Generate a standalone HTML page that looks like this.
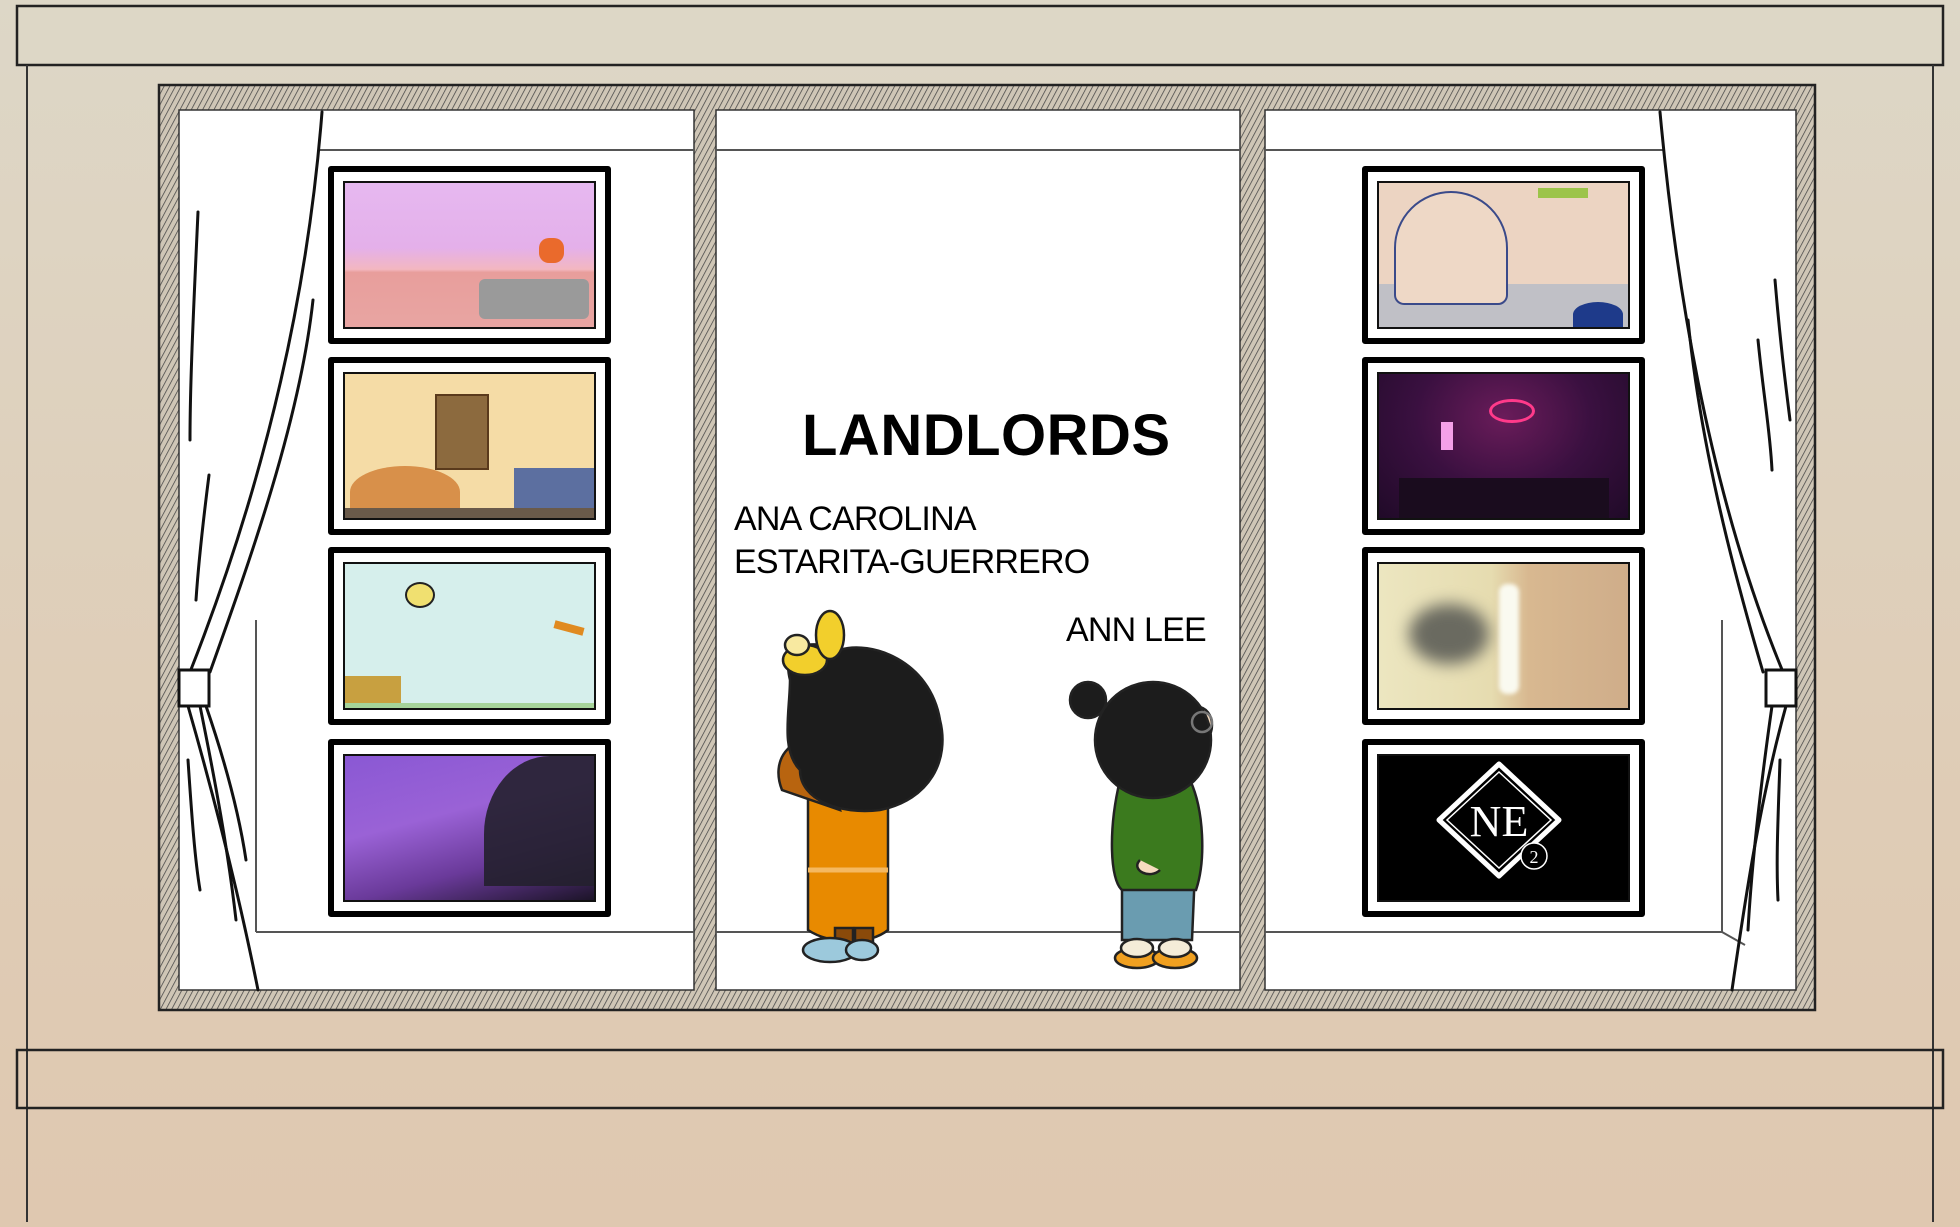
<!DOCTYPE html>
<html><head><meta charset="utf-8">
<style>
html,body{margin:0;padding:0;}
body{width:1960px;height:1227px;overflow:hidden;position:relative;background:linear-gradient(#ddd7c7,#dfcdb7 60%,#dfc8b0);font-family:"Liberation Sans",sans-serif;}
svg{position:absolute;left:0;top:0;}
.t{position:absolute;color:#000;white-space:nowrap;}
.thumb{position:absolute;width:271px;height:166px;border:6px solid #000;border-radius:3px;background:#fff;}
.thumb .img{position:absolute;left:9px;top:9px;right:9px;bottom:9px;border:2px solid #111;overflow:hidden;}
</style></head><body>
<svg width="1960" height="1227" viewBox="0 0 1960 1227">
<defs>
<pattern id="h" width="5" height="5" patternUnits="userSpaceOnUse" patternTransform="rotate(28)">
<rect width="5" height="5" fill="#cfc6b6"/><line x1="0" y1="0" x2="0" y2="5" stroke="#444" stroke-width="1.5"/>
</pattern>
</defs>
<!-- top rail -->
<rect x="17" y="6" width="1926" height="59" fill="#ddd7c6" stroke="#222" stroke-width="2.5"/>
<line x1="27" y1="65" x2="27" y2="1222" stroke="#333" stroke-width="2"/>
<line x1="1933" y1="65" x2="1933" y2="1222" stroke="#333" stroke-width="2"/>
<!-- bottom rail -->
<rect x="17" y="1050" width="1926" height="58" fill="none" stroke="#222" stroke-width="2.5"/>
<!-- frame -->
<rect x="159" y="85" width="1656" height="925" fill="url(#h)" stroke="#222" stroke-width="2.5"/>
<rect x="179" y="110" width="515" height="880" fill="#fff" stroke="#333" stroke-width="1.5"/>
<rect x="716" y="110" width="524" height="880" fill="#fff" stroke="#333" stroke-width="1.5"/>
<rect x="1265" y="110" width="531" height="880" fill="#fff" stroke="#333" stroke-width="1.5"/>
<!-- inner lines -->
<g stroke="#555" stroke-width="2" fill="none">
<line x1="318" y1="150" x2="694" y2="150"/>
<line x1="716" y1="150" x2="1240" y2="150"/>
<line x1="1265" y1="150" x2="1664" y2="150"/>
<line x1="256" y1="932" x2="694" y2="932"/>
<line x1="716" y1="932" x2="1240" y2="932"/>
<line x1="1265" y1="932" x2="1722" y2="932"/>
<line x1="256" y1="620" x2="256" y2="932"/>
<line x1="1722" y1="620" x2="1722" y2="932"/>
<line x1="1722" y1="932" x2="1745" y2="945"/>
</g>
<!-- left curtain -->
<g stroke="#111" stroke-width="3" fill="none" stroke-linecap="round">
<path d="M322 112 C305 330 250 520 190 672"/>
<path d="M210 672 C250 560 300 420 313 300"/>
<path d="M188 706 C215 800 240 900 258 990"/>
<path d="M200 706 C215 780 228 850 236 920"/>
<path d="M198 212 C194 300 190 380 190 440"/>
<path d="M209 475 C202 530 198 570 196 600"/>
<path d="M188 760 C192 820 195 860 200 890"/>
<path d="M206 706 C228 770 240 820 246 860"/>
</g>
<rect x="179" y="670" width="30" height="36" fill="#fff" stroke="#111" stroke-width="3"/>
<!-- right curtain -->
<g stroke="#111" stroke-width="3" fill="none" stroke-linecap="round">
<path d="M1660 112 C1680 330 1720 520 1783 672"/>
<path d="M1763 672 C1730 560 1700 440 1688 320"/>
<path d="M1786 706 C1760 800 1745 900 1732 990"/>
<path d="M1772 706 C1760 790 1752 860 1748 930"/>
<path d="M1775 280 C1780 340 1785 380 1790 420"/>
<path d="M1758 340 C1764 400 1770 430 1772 470"/>
<path d="M1780 760 C1778 820 1776 860 1778 900"/>
</g>
<rect x="1766" y="670" width="30" height="36" fill="#fff" stroke="#111" stroke-width="3"/>
<!-- girl -->
<g stroke="#222" stroke-width="2.5">
<path d="M808 785 L808 930 C830 945 870 945 888 930 L888 790 Z" fill="#e88a00"/>
<line x1="808" y1="870" x2="888" y2="870" stroke="#f5b860" stroke-width="5"/>
<path d="M782 790 C770 760 790 735 820 740 L840 810 Z" fill="#b8640f"/>
<rect x="835" y="928" width="18" height="26" fill="#8a4a0a"/>
<rect x="855" y="928" width="18" height="26" fill="#8a4a0a"/>
<ellipse cx="830" cy="950" rx="27" ry="12" fill="#9cc9dc"/>
<ellipse cx="862" cy="950" rx="16" ry="10" fill="#9cc9dc"/>
<path d="M790 680 C780 640 815 640 840 650 C870 640 930 660 940 720 C950 760 930 800 880 810 C840 815 800 800 800 770 C780 750 790 710 790 680Z" fill="#1c1c1c"/>
<ellipse cx="805" cy="660" rx="22" ry="15" fill="#f2cf2c"/>
<ellipse cx="830" cy="635" rx="14" ry="24" fill="#f2cf2c"/>
<ellipse cx="797" cy="645" rx="12" ry="10" fill="#f8e9a0"/>
</g>
<!-- boy -->
<g stroke="#222" stroke-width="2.5">
<path d="M1122 870 L1122 940 L1192 940 L1195 870 Z" fill="#6a9cb0"/>
<path d="M1120 780 C1108 830 1110 880 1122 890 L1196 890 C1206 860 1204 810 1190 780 Z" fill="#3b7a1e"/>
<ellipse cx="1137" cy="958" rx="22" ry="10" fill="#f0a020"/>
<ellipse cx="1175" cy="958" rx="22" ry="10" fill="#f0a020"/>
<ellipse cx="1137" cy="948" rx="16" ry="9" fill="#f4ecd8"/>
<ellipse cx="1175" cy="948" rx="16" ry="9" fill="#f4ecd8"/>
<ellipse cx="1198" cy="725" rx="14" ry="18" fill="#f6dcc0"/>
<circle cx="1153" cy="740" r="58" fill="#1c1c1c"/>
<circle cx="1088" cy="700" r="18" fill="#1c1c1c"/>
<circle cx="1202" cy="722" r="10" fill="none" stroke="#777"/>
<path d="M1140 860 C1130 870 1150 880 1160 870" fill="#f6dcc0"/>
</g>
</svg>

<div class="t" style="left:802px;top:402px;font-size:58px;font-weight:bold;letter-spacing:0.5px;">LANDLORDS</div>
<div class="t" style="left:734px;top:498px;font-size:34px;line-height:43px;letter-spacing:-0.8px;">ANA CAROLINA<br>ESTARITA-GUERRERO</div>
<div class="t" style="left:1066px;top:611px;font-size:34px;letter-spacing:-0.8px;">ANN LEE</div>

<!-- left thumbnails -->
<div class="thumb" style="left:328px;top:166px;"><div class="img" style="background:linear-gradient(#e6b8f0 0%,#e4b0ea 45%,#f3b7c0 60%,#e89e9c 62%,#e8a5a2 100%);">
<div style="position:absolute;right:5px;bottom:8px;width:110px;height:40px;background:#9a9a9a;border-radius:6px;"></div>
<div style="position:absolute;right:30px;top:55px;width:25px;height:25px;background:#ea6a2c;border-radius:40%;"></div></div></div>
<div class="thumb" style="left:328px;top:357px;"><div class="img" style="background:#f5dca6;">
<div style="position:absolute;left:90px;top:20px;width:50px;height:72px;background:#8c6a3e;border:2px solid #5a3a1c;"></div>
<div style="position:absolute;left:5px;bottom:0;width:110px;height:52px;background:#d8904a;border-radius:50% 50% 0 0;"></div>
<div style="position:absolute;right:0;bottom:10px;width:80px;height:40px;background:#5c6fa0;"></div>
<div style="position:absolute;left:0;right:0;bottom:0;height:10px;background:#6a5a4a;"></div></div></div>
<div class="thumb" style="left:328px;top:547px;"><div class="img" style="background:#d6efec;">
<div style="position:absolute;left:0;bottom:0;width:56px;height:32px;background:#c8a040;"></div>
<div style="position:absolute;left:60px;top:18px;width:26px;height:22px;background:#f0e070;border-radius:50%;border:2px solid #222;"></div>
<div style="position:absolute;right:10px;top:60px;width:30px;height:8px;background:#e08a20;transform:rotate(15deg);"></div>
<div style="position:absolute;left:0;right:0;bottom:0;height:5px;background:#a6d49a;"></div></div></div>
<div class="thumb" style="left:328px;top:739px;"><div class="img" style="background:linear-gradient(165deg,#8a58d4 0%,#9a62d6 40%,#6a3a9a 70%,#1c1428 100%);">
<div style="position:absolute;right:0;top:0;width:110px;height:130px;background:#23202e;border-radius:60% 0 0 0;opacity:.9;"></div></div></div>

<!-- right thumbnails -->
<div class="thumb" style="left:1362px;top:166px;"><div class="img" style="background:linear-gradient(#ecd4c2 70%,#c0c0c6 70%);">
<div style="position:absolute;left:15px;top:8px;width:110px;height:110px;border:2px solid #3a4a8a;border-radius:50% 50% 10px 10px;background:#eed8c6;"></div>
<div style="position:absolute;right:40px;top:5px;width:50px;height:10px;background:#9cc44a;"></div>
<div style="position:absolute;right:5px;bottom:0;width:50px;height:25px;background:#1e3a8a;border-radius:50% 50% 0 0;"></div></div></div>
<div class="thumb" style="left:1362px;top:357px;"><div class="img" style="background:radial-gradient(ellipse at 50% 30%,#6a1c5a,#3a1040 50%,#200a28);">
<div style="position:absolute;left:110px;top:25px;width:40px;height:18px;border:3px solid #ff3a8a;border-radius:50%;"></div>
<div style="position:absolute;left:20px;bottom:0;width:210px;height:40px;background:#1a0c1e;"></div>
<div style="position:absolute;left:62px;top:48px;width:12px;height:28px;background:#f4a0e8;"></div></div></div>
<div class="thumb" style="left:1362px;top:547px;"><div class="img" style="background:linear-gradient(90deg,#ece6c0,#e6dcb0 45%,#d8b890 60%,#cfad8a);">
<div style="position:absolute;left:30px;top:40px;width:80px;height:60px;background:#6a6a60;border-radius:50%;filter:blur(8px);"></div>
<div style="position:absolute;left:120px;top:20px;width:20px;height:110px;background:#fafaf0;border-radius:8px;filter:blur(2px);"></div></div></div>
<div class="thumb" style="left:1362px;top:739px;"><div class="img" style="background:#000;">
<svg width="240" height="130" style="position:absolute;left:0;top:0;">
<path d="M120 8 L180 64 L120 120 L60 64 Z" fill="none" stroke="#fff" stroke-width="5" stroke-linejoin="round"/>
<path d="M120 16 L172 64 L120 112 L68 64 Z" fill="none" stroke="#fff" stroke-width="1.5"/>
<text x="120" y="80" text-anchor="middle" font-family="Liberation Serif,serif" font-size="44" fill="#fff">NE</text>
<circle cx="155" cy="100" r="13" fill="#000" stroke="#fff" stroke-width="1.5"/>
<text x="155" y="107" text-anchor="middle" font-family="Liberation Serif,serif" font-size="18" fill="#fff">2</text>
</svg></div></div>
</body></html>
